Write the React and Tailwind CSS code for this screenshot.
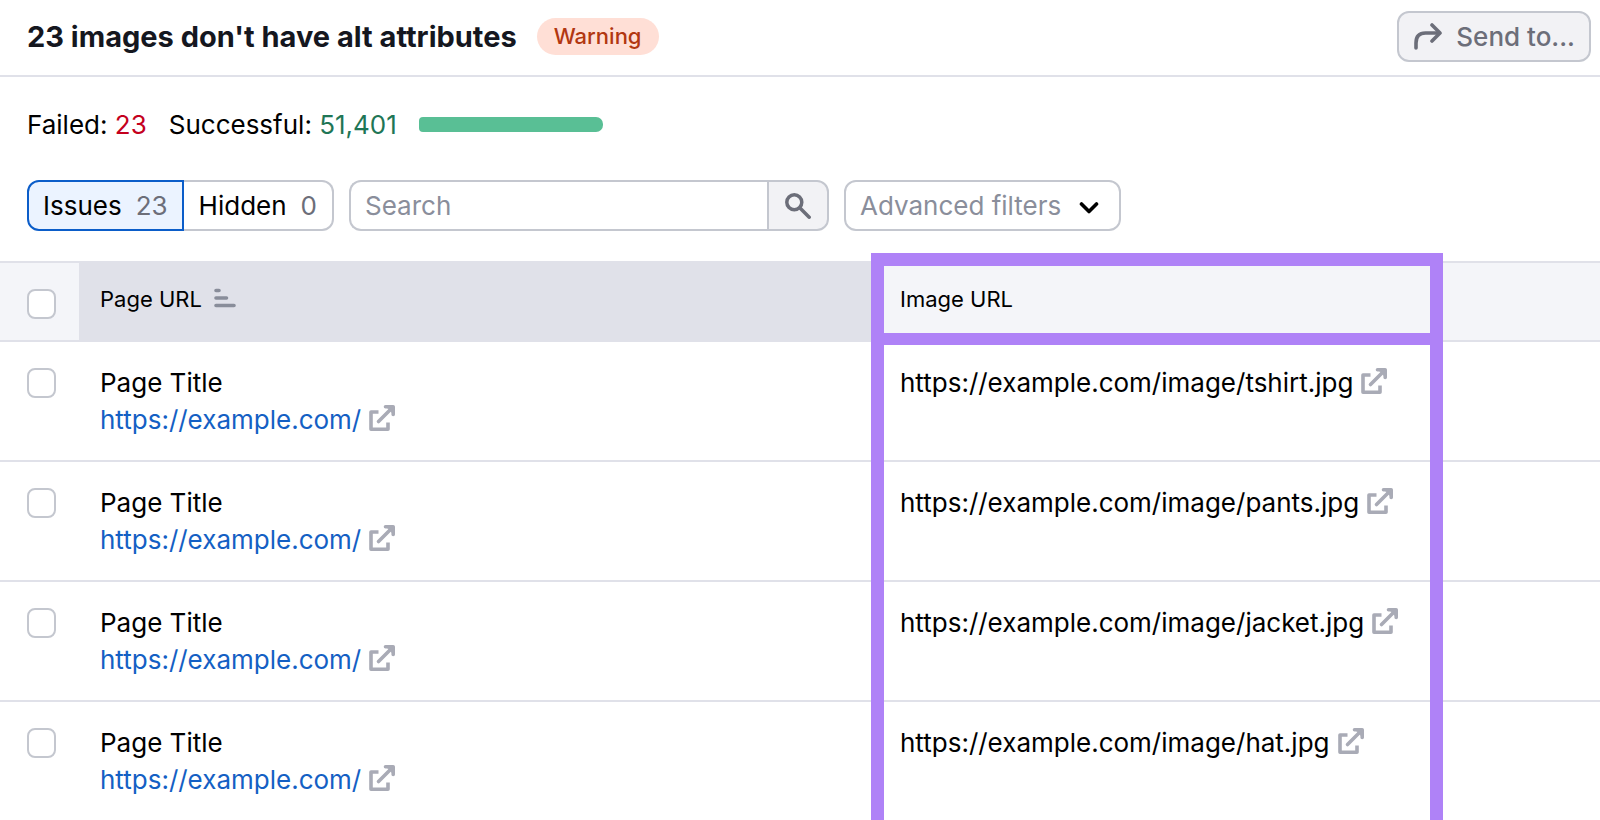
import { useState } from 'react';

const images = ['tshirt', 'pants', 'jacket', 'hat'];

const ShareIcon = () => (
  <svg className="h-7 w-7" viewBox="0 0 28 28" fill="none" stroke="currentColor" strokeWidth="3.6" strokeLinecap="round" strokeLinejoin="round" aria-hidden="true">
    <path d="M2 25V20C2 13.500 5.5 10 11.500 10H25" />
    <path d="M18 2L26 10L18 18" />
  </svg>
);

const SearchIcon = () => (
  <svg className="h-[26px] w-[26px]" viewBox="0 0 26 26" fill="none" stroke="currentColor" strokeWidth="3.500" strokeLinecap="round" aria-hidden="true">
    <circle cx="9.300" cy="9.300" r="7.500" />
    <path d="M15 15L24.200 24.200" />
  </svg>
);

const ExternalIcon = () => (
  <svg className="mb-1 h-[26px] w-[26px] shrink-0 text-[#a9abb6]" viewBox="0 0 26 26" fill="none" stroke="currentColor" strokeWidth="3.600" strokeLinecap="round" strokeLinejoin="round" aria-hidden="true">
    <path d="M9.500 7H2V24.200H19V17.500" strokeLinecap="butt" />
    <path d="M9.500 16.500L22 4" />
    <path d="M16.500 1.800H24.200V9.500" />
    <path d="M19 3H23V7Z" fill="currentColor" strokeWidth="1" />
  </svg>
);

const SortIcon = () => (
  <svg className="mb-1 h-5 w-[22px] text-[#898d9a]" viewBox="0 0 22 20" stroke="currentColor" strokeWidth="3.600" strokeLinecap="round" aria-hidden="true">
    <path d="M2 2.500H5M2 10H12.500M2 17.500H20" />
  </svg>
);

const Checkbox = ({ label, checked, onChange }) => (
  <input
    type="checkbox"
    aria-label={label}
    checked={checked}
    onChange={onChange}
    className="block h-[30px] w-[29px] appearance-none rounded-lg border-2 border-[#c4c7cf] bg-white checked:border-[#0b5dc9] checked:bg-[#0b5dc9]"
  />
);

const App = () => {
  const [tab, setTab] = useState('issues');
  const [selected, setSelected] = useState([]);

  const toggle = (name) =>
    setSelected((prev) => (prev.includes(name) ? prev.filter((n) => n !== name) : [...prev, name]));

  const tabClass = (name) =>
    tab === name ? 'border-[#0b5dc9] bg-[#ebf3ff]' : 'border-[#c4c7cf] bg-white';

  return (
    <div className="h-screen overflow-hidden bg-white font-['Inter',sans-serif] text-[26px] leading-[37px] text-black">
      <header className="flex items-center justify-between border-b-2 border-[#e0e1e9] pt-[11px] pr-[9px] pb-[13px] pl-[27px]">
        <div className="flex items-center gap-5">
          <h1 className="text-[29px] font-bold text-[#15171f]">23 images don't have alt attributes</h1>
          <span className="rounded-full bg-[#ffdfd6] px-[17px] text-[22px] font-medium text-[#b23711]">Warning</span>
        </div>
        <button className="flex h-[51px] items-center gap-[14px] rounded-xl border-2 border-[#c4c7cf] bg-[#f2f2f5] pr-[14px] pl-[15px] font-medium text-[#6c6e79]">
          <ShareIcon />
          Send to...
        </button>
      </header>

      <div className="flex items-center gap-[22px] pt-[29px] pl-[27px]">
        <p>Failed: <span className="text-[#c4001d]">23</span></p>
        <p>Successful: <span className="text-[#1f7656]">51,401</span></p>
        <div className="h-[15px] w-[184px] rounded-l-[4px] rounded-r-[7px] bg-[#59bf95]" />
      </div>

      <div className="flex gap-[15px] pt-[37px] pb-[30px] pl-[27px]">
        <div className="flex">
          <button
            onClick={() => setTab('issues')}
            className={`flex h-[51px] items-center gap-[14px] rounded-l-xl border-2 px-[14px] ${tabClass('issues')}`}
          >
            Issues <span className="text-[#6c6e79]">23</span>
          </button>
          <button
            onClick={() => setTab('hidden')}
            className={`flex h-[51px] items-center gap-[14px] rounded-r-xl border-2 border-l-0 px-[15px] ${tabClass('hidden')}`}
          >
            Hidden <span className="text-[#6c6e79]">0</span>
          </button>
        </div>

        <form className="flex h-[51px] w-[480px]" onSubmit={(e) => e.preventDefault()}>
          <input
            type="text"
            aria-label="Search"
            placeholder="Search"
            className="min-w-0 flex-1 rounded-l-xl border-2 border-r-0 border-[#c4c7cf] px-[14px] placeholder:text-[#8a8e9b]"
          />
          <button aria-label="Run search" className="flex w-[62px] items-center justify-center rounded-r-xl border-2 border-[#c4c7cf] bg-[#f2f2f5] text-[#6c6e79]">
            <SearchIcon />
          </button>
        </form>

        <div className="relative">
          <select aria-label="Advanced filters" className="h-[51px] w-[277px] appearance-none rounded-xl border-2 border-[#c4c7cf] bg-white pr-12 pl-[14px] text-[#8a8e9b]">
            <option>Advanced filters</option>
          </select>
          <svg className="pointer-events-none absolute top-5 right-[22px] h-4 w-5" viewBox="0 0 20 16" fill="none" stroke="#000" strokeWidth="3.600" strokeLinecap="round" strokeLinejoin="round" aria-hidden="true">
            <path d="M2.500 4L10 11.500L17.500 4" />
          </svg>
        </div>
      </div>

      <table className="w-full table-fixed border-separate border-spacing-0 text-left">
        <colgroup>
          <col className="w-[79px]" />
          <col className="w-1/2" />
          <col className="w-[35%]" />
          <col />
        </colgroup>
        <thead className="bg-[#f4f5f9] align-top text-[22px]">
          <tr className="h-[81px]">
            <th className="border-y-2 border-[#e0e1e9] pt-[26px] pl-[27px]">
              <Checkbox
                label="Select all pages"
                checked={selected.length === images.length}
                onChange={() => setSelected(selected.length === images.length ? [] : images)}
              />
            </th>
            <th className="border-y-2 border-[#e0e1e9] bg-[#e0e1e9] px-[21px] pt-[18px] font-normal">
              <span className="flex items-center gap-3">Page URL <SortIcon /></span>
            </th>
            <th className="relative border-y-2 border-[#e0e1e9] px-[21px] pt-[18px] font-normal">
              Image URL
              {/* column highlight: header frame, then the frame down the rows */}
              <span className="pointer-events-none absolute -top-[10px] -right-1 -bottom-[5px] -left-2 border-[13px] border-b-[12px] border-[#af82f7]" />
              <span className="pointer-events-none absolute top-full -right-1 -left-2 h-screen border-x-[13px] border-[#af82f7]" />
            </th>
            <th className="border-y-2 border-[#e0e1e9]" />
          </tr>
        </thead>
        <tbody className="align-top">
          {images.map((name) => (
            <tr key={name} className="h-[120px]">
              <td className="border-b-2 border-[#e0e1e9] pt-[26px] pl-[27px]">
                <Checkbox label={`Select page with ${name}.jpg`} checked={selected.includes(name)} onChange={() => toggle(name)} />
              </td>
              <td className="border-b-2 border-[#e0e1e9] px-[21px] pt-[22px]">
                <div>Page Title</div>
                <a href="#page" className="flex items-center gap-2 text-[#1460c4]">
                  https://example.com/ <ExternalIcon />
                </a>
              </td>
              <td className="border-b-2 border-[#e0e1e9] px-[21px] pt-[22px]">
                <a href="#image" className="flex items-center gap-2">
                  https://example.com/image/{name}.jpg <ExternalIcon />
                </a>
              </td>
              <td className="border-b-2 border-[#e0e1e9]" />
            </tr>
          ))}
        </tbody>
      </table>
    </div>
  );
};

export default App;
